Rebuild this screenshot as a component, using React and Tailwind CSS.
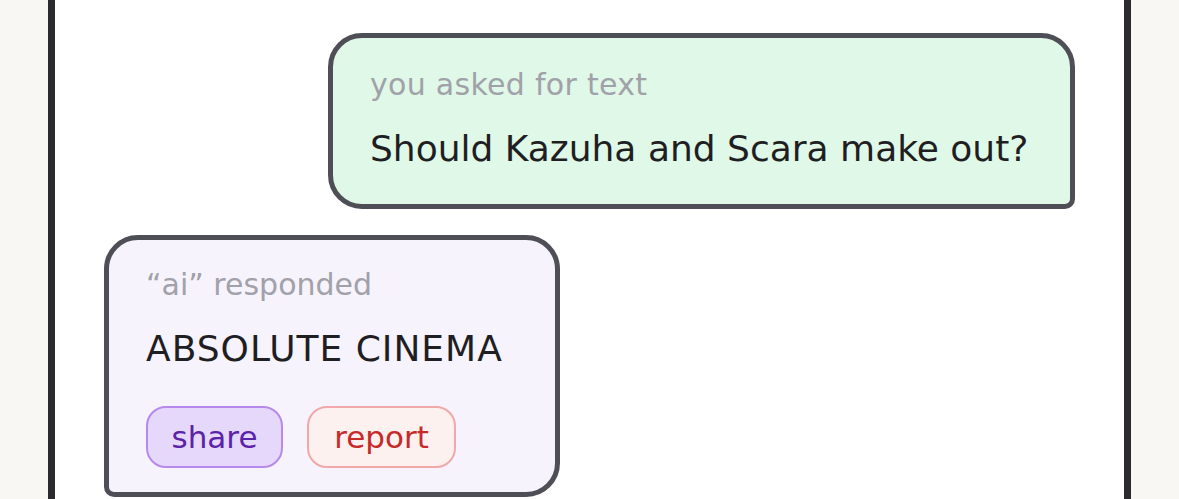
import React from 'react';

const font = { fontFamily: '"Comic Sans MS", "DejaVu Sans", sans-serif' };

const App = () => {
  return (
    <div className="h-[499px] overflow-hidden bg-[#f8f7f3] px-12" style={font}>
      <div className="flex h-full flex-col gap-[26px] border-x-[7px] border-[#2b2b2f] bg-white px-[49px] pt-[33px]">
        <div className="w-[747px] h-[176px] self-end rounded-[34px] rounded-br-[10px] border-[5px] border-[#4e4e56] bg-[#e0f8e7] px-[37px] pt-[29px]">
          <p className="text-[30px] leading-[36px] tracking-[0.3px] text-[#a1a1a9]">you asked for text</p>
          <p className="mt-[24px] text-[36px] leading-[44px] text-[#1f1f23]">Should Kazuha and Scara make out?</p>
        </div>

        <div className="w-[456px] h-[262px] rounded-[34px] rounded-bl-[10px] border-[5px] border-[#4e4e56] bg-[#f6f3fd] px-[37px] pt-[27px]">
          <p className="text-[30px] leading-[36px] text-[#a1a1a9]">“ai” responded</p>
          <p className="mt-[24px] text-[36px] leading-[44px] tracking-[1px] text-[#1f1f23]">ABSOLUTE CINEMA</p>
          <div className="mt-[35px] flex gap-6">
            <button className="flex h-[62px] w-[137px] items-center justify-center rounded-[20px] border-2 border-[#b689ec] bg-[#e5d8fb] text-[31px] text-[#5b23a8]">
              share
            </button>
            <button className="flex h-[62px] w-[149px] items-center justify-center rounded-[20px] border-2 border-[#f0a9a8] bg-[#fdf1ef] text-[31px] text-[#c62a2a]">
              report
            </button>
          </div>
        </div>
      </div>
    </div>
  );
};

export default App;
